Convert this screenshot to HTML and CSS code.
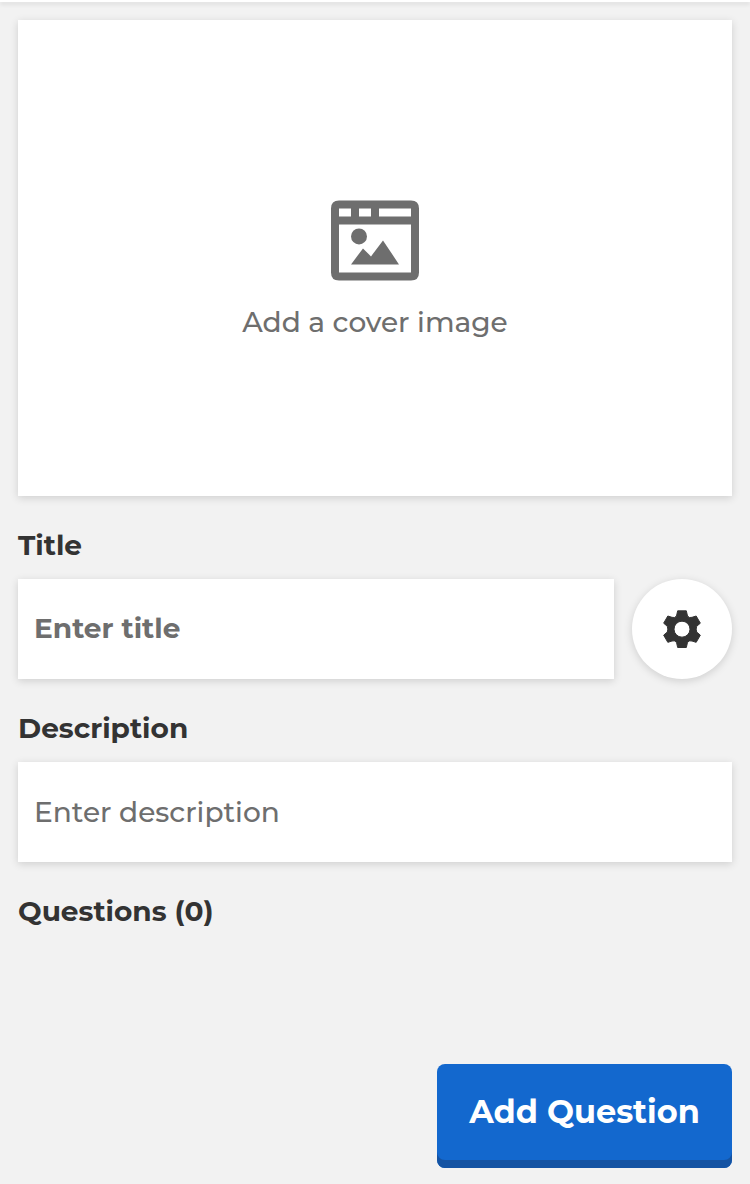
FILE: index.html
```html
<!DOCTYPE html>
<html lang="en">
<head>
<meta charset="utf-8">
<title>Create</title>
<link rel="stylesheet" href="styles.css">
</head>
<body>
<header class="topbar"></header>
<main class="page">
  <button class="cover">
    <svg class="cover-icon" viewBox="0 -0.400 88 80" fill="currentColor">
      <path fill-rule="evenodd" d="M8 0H80Q88 0 88 8V72Q88 80 80 80H8Q0 80 0 72V8Q0 0 8 0ZM8 8V16H20V8ZM28 8V16H40V8ZM48 8V16H80V8ZM8 24V72H80V24Z"/>
      <circle cx="28" cy="36" r="8"/>
      <path d="M20 64L32 48L40 56L52 40L68 64Z"/>
    </svg>
    <span class="cover-text">Add a cover image</span>
  </button>
  <label class="label" for="title">Title</label>
  <div class="row">
    <div class="field field-title" id="title">Enter title</div>
    <button class="settings" aria-label="Settings">
      <svg class="gear" viewBox="186 131 120 120">
        <path fill="currentColor" stroke="currentColor" stroke-width="3" stroke-linejoin="round" fill-rule="evenodd" d="M233 136.500H259L262.500 152Q268 159 276 156L288.500 152L301 173.500L290 183Q287 191.500 290 200L301 209.500L288.500 231L276 227Q268 224 262.500 231L259 246.500H233L229.500 231Q224 224 216 227L203.500 231L191 209.500L202 200Q205 191.500 202 183L191 173.500L203.500 152L216 156Q224 159 229.500 152ZM246 167.500A24 24 0 0 0 246 215.500A24 24 0 0 0 246 167.500Z"/>
      </svg>
    </button>
  </div>
  <label class="label" for="description">Description</label>
  <div class="field" id="description">Enter description</div>
  <h2 class="label">Questions (0)</h2>
  <button class="add">Add Question</button>
</main>
</body>
</html>
```
FILE: styles.css
```css
* { box-sizing: border-box; }
body {
  margin: 0;
  height: 1184px;
  display: flex;
  flex-direction: column;
  background: #f2f2f2;
  color: #333;
  font-family: Montserrat, Inter, sans-serif;
  font-size: 28px;
  font-weight: 500;
  overflow: hidden;
}
button { border: 0; padding: 0; font: inherit; color: inherit; }
.topbar {
  height: 2px;
  flex: none;
  background: #fff;
  box-shadow: 0 2px 4px rgba(0,0,0,.15);
}
.page {
  flex: 1;
  display: flex;
  flex-direction: column;
  padding: 18px 18px 16px;
}
.cover, .field, .settings {
  background: #fff;
  box-shadow: 0 2px 8px rgba(0,0,0,.15);
}
.cover {
  height: 476px;
  flex: none;
  display: flex;
  flex-direction: column;
  align-items: center;
  padding-top: 180px;
  color: #6e6e6e;
}
.cover-icon { width: 88px; height: 80px; overflow: visible; }
.cover-text {
  margin-top: 22px;
  line-height: 40px;
}
.label {
  height: 83px;
  margin: 0;
  padding-top: 29px;
  line-height: 40px;
  font-size: 28px;
  font-weight: 700;
}
.row { display: flex; gap: 18px; }
.field {
  height: 100px;
  padding-left: 16px;
  line-height: 100px;
  color: #6e6e6e;
}
.field-title { flex: 1; font-weight: 700; line-height: 98px; }
.settings {
  width: 100px;
  height: 100px;
  border-radius: 50%;
  display: grid;
  place-items: center;
}
.gear { width: 40px; height: 40px; }
.add {
  align-self: flex-end;
  margin-top: auto;
  width: 295px;
  height: 104px;
  padding-bottom: 10px;
  border-radius: 8px;
  background: #1368ce;
  box-shadow: inset 0 -8px #1453a3;
  color: #fff;
  font-size: 32px;
  font-weight: 700;
}
```
